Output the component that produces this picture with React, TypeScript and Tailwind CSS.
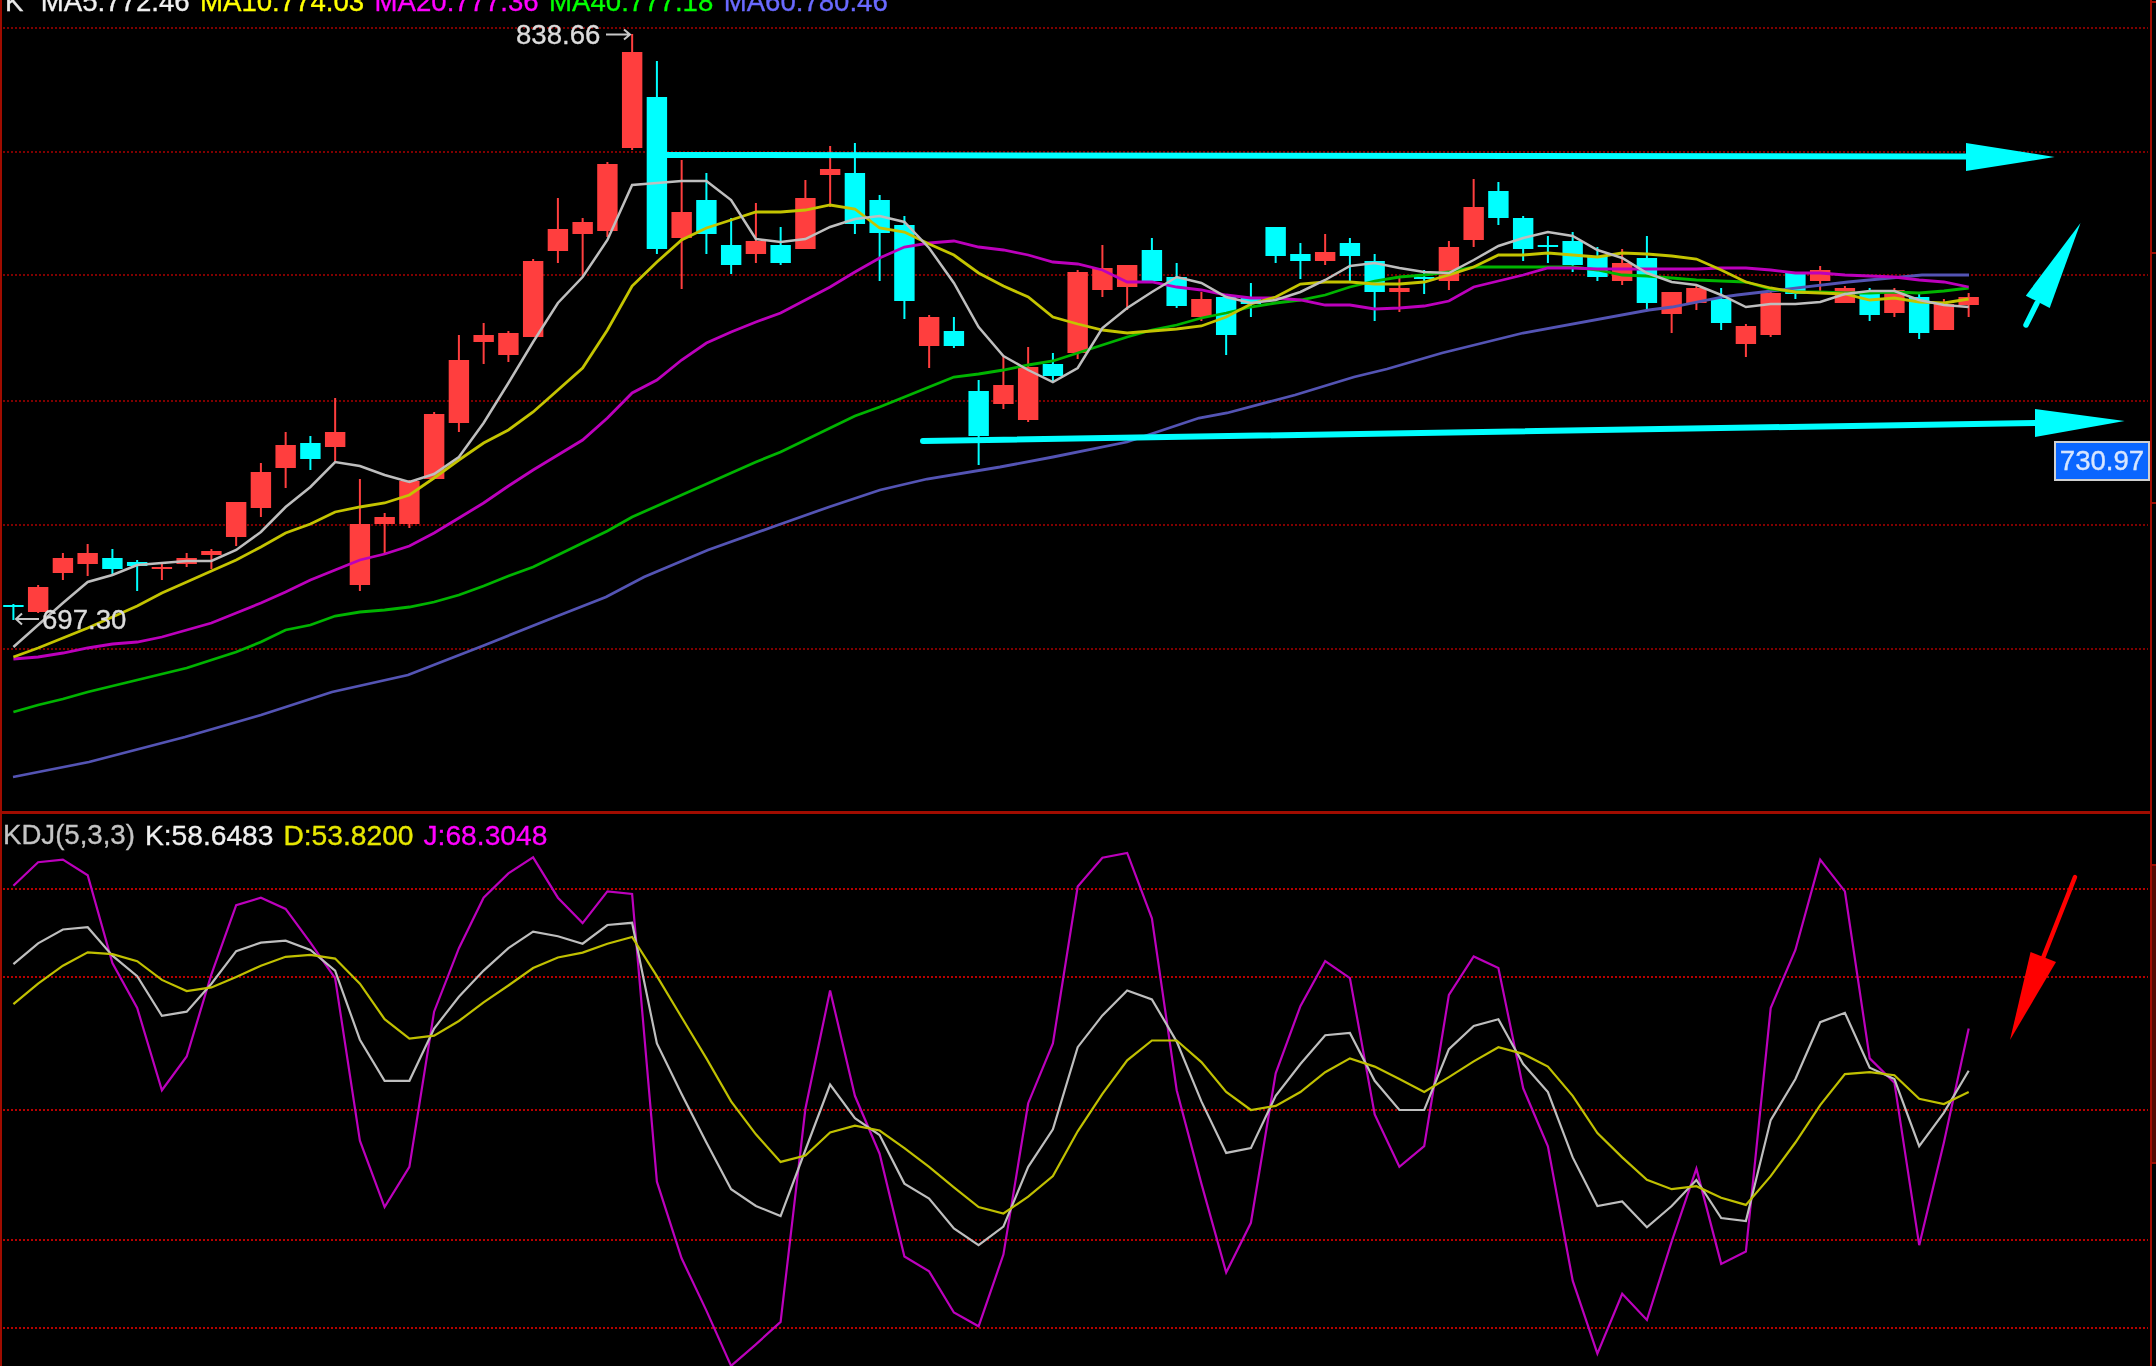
const X = (i: number) => 13.4 + 24.75 * i;

type Candle = [number, number, number, number, "r" | "c"];
const candles: Candle[] = [
  [604, 605, 607, 620, "c"], [585, 587, 612, 613, "r"], [553, 558, 573, 580, "r"], [544, 553, 564, 576, "r"],
  [549, 558, 569, 574, "c"], [560, 562, 566, 591, "c"], [563, 567, 569, 580, "r"], [553, 558, 564, 567, "r"],
  [549, 551, 555, 569, "r"], [502, 502, 537, 546, "r"], [463, 472, 508, 517, "r"], [432, 445, 468, 488, "r"],
  [436, 443, 459, 470, "c"], [398, 432, 447, 463, "r"], [479, 524, 585, 591, "r"], [513, 517, 524, 553, "r"],
  [480, 481, 524, 528, "r"], [412, 414, 479, 479, "r"], [335, 360, 423, 432, "r"], [323, 335, 342, 364, "r"],
  [331, 333, 355, 362, "r"], [259, 261, 337, 337, "r"], [198, 229, 251, 263, "r"], [218, 222, 234, 276, "r"],
  [162, 164, 231, 237, "r"], [34, 52, 148, 150, "r"], [61, 97, 249, 254, "c"], [160, 212, 238, 289, "r"],
  [173, 200, 234, 254, "c"], [218, 245, 265, 274, "c"], [203, 241, 254, 263, "r"], [227, 245, 263, 265, "c"],
  [180, 198, 249, 249, "r"], [146, 169, 175, 207, "r"], [143, 173, 224, 234, "c"], [195, 200, 233, 281, "c"],
  [216, 225, 301, 319, "c"], [315, 317, 346, 368, "r"], [317, 331, 346, 348, "c"], [380, 391, 436, 465, "c"],
  [357, 385, 404, 409, "r"], [347, 367, 420, 422, "r"], [353, 364, 376, 382, "c"], [270, 272, 353, 359, "r"],
  [245, 268, 290, 297, "r"], [265, 265, 287, 310, "r"], [238, 250, 281, 281, "c"], [263, 277, 306, 308, "c"],
  [292, 299, 317, 321, "r"], [295, 297, 335, 355, "c"], [283, 298, 304, 317, "c"], [227, 227, 256, 263, "c"],
  [243, 254, 261, 279, "c"], [234, 252, 261, 265, "r"], [238, 243, 256, 281, "c"], [254, 261, 292, 321, "c"],
  [278, 288, 292, 312, "r"], [270, 277, 279, 294, "c"], [241, 247, 281, 290, "r"], [179, 207, 240, 247, "r"],
  [182, 191, 218, 225, "c"], [216, 218, 249, 261, "c"], [236, 245, 247, 263, "c"], [232, 241, 265, 272, "c"],
  [247, 256, 277, 281, "c"], [249, 263, 281, 285, "r"], [236, 258, 303, 311, "c"], [292, 292, 314, 333, "r"],
  [285, 288, 303, 310, "r"], [288, 299, 323, 330, "c"], [324, 326, 344, 357, "r"], [290, 293, 335, 337, "r"],
  [273, 273, 294, 299, "c"], [266, 270, 281, 291, "r"], [286, 288, 303, 303, "r"], [288, 292, 315, 321, "c"],
  [288, 290, 313, 317, "r"], [294, 297, 333, 339, "c"], [299, 304, 330, 330, "r"], [293, 297, 305, 317, "r"],
];

const ma5 = [647, 625, 603, 582, 575, 565, 563, 561, 561, 550, 532, 507, 487, 462, 466, 475, 482, 474, 457, 423, 383, 342, 303, 277, 240, 185, 183, 181, 181, 200, 239, 242, 239, 227, 219, 216, 222, 248, 283, 327, 356, 370, 382, 368, 328, 308, 292, 277, 283, 297, 303, 300, 292, 280, 266, 263, 268, 272, 273, 260, 246, 238, 232, 236, 250, 258, 273, 282, 285, 295, 307, 304, 304, 302, 294, 291, 291, 300, 305, 307];
const ma10 = [657, 648, 638, 628, 617, 606, 593, 582, 571, 560, 547, 533, 524, 512, 507, 503, 495, 478, 460, 443, 430, 412, 390, 368, 330, 286, 262, 240, 228, 220, 212, 212, 210, 205, 209, 228, 232, 244, 255, 273, 286, 297, 317, 324, 330, 333, 331, 329, 326, 317, 304, 297, 284, 282, 282, 284, 284, 282, 275, 267, 255, 255, 253, 255, 257, 253, 254, 256, 259, 270, 282, 288, 292, 293, 294, 300, 298, 302, 303, 299];
const ma20 = [659, 657, 653, 648, 644, 642, 637, 630, 623, 613, 603, 592, 580, 570, 560, 554, 546, 533, 518, 503, 486, 470, 455, 440, 418, 393, 380, 360, 343, 332, 322, 313, 300, 287, 272, 258, 247, 243, 241, 247, 250, 255, 262, 264, 270, 282, 282, 287, 290, 295, 298, 298, 300, 305, 305, 309, 308, 306, 301, 287, 281, 275, 268, 268, 269, 269, 269, 269, 269, 268, 268, 270, 273, 273, 275, 276, 277, 280, 282, 287];
const ma40 = [712, 705, 699, 692, 686, 680, 674, 668, 660, 652, 642, 630, 625, 616, 612, 610, 607, 602, 595, 586, 576, 567, 555, 543, 531, 517, 506, 495, 484, 473, 462, 452, 440, 428, 416, 407, 397, 387, 377, 374, 370, 365, 361, 353, 345, 337, 330, 325, 318, 313, 307, 303, 300, 295, 287, 281, 277, 275, 272, 267, 267, 267, 267, 267, 270, 275, 276, 278, 280, 281, 282, 289, 292, 292, 293, 293, 292, 293, 291, 288];
const ma60: [number, number][] = [
  [13, 777], [89, 762], [185, 737], [261, 715], [332, 692], [408, 675], [485, 645], [555, 617], [606, 597], [644, 577],
  [708, 550], [778, 525], [829, 507], [880, 490], [927, 479], [1000, 467], [1053, 457], [1127, 442], [1199, 418], [1227, 413],
  [1295, 395], [1354, 377], [1387, 369], [1442, 353], [1523, 333], [1649, 310], [1672, 307], [1723, 297], [1737, 295], [1848, 282],
  [1922, 275], [1969, 275],
];

const jZ = [283, 220, 213, 255, 490, 610, 830, 740, 520, 335, 315, 345, 435, 530, 965, 1143, 1035, 620, 450, 315, 250, 207, 315, 383, 298, 305, 1075, 1280, 1420, 1568, 1510, 1450, 880, 563, 845, 1000, 1275, 1315, 1425, 1462, 1270, 865, 705, 285, 208, 195, 370, 830, 1080, 1318, 1185, 785, 605, 485, 530, 895, 1035, 980, 575, 472, 503, 825, 980, 1340, 1535, 1375, 1445, 1235, 1040, 1295, 1262, 610, 455, 213, 298, 745, 810, 1245, 970, 665];
const kZ = [493, 437, 400, 394, 470, 525, 631, 620, 545, 458, 435, 430, 455, 510, 695, 805, 805, 665, 580, 510, 450, 406, 418, 438, 388, 382, 705, 840, 970, 1095, 1140, 1167, 990, 815, 905, 950, 1080, 1120, 1200, 1245, 1195, 1035, 935, 715, 630, 563, 587, 700, 860, 998, 985, 845, 760, 683, 677, 805, 883, 883, 720, 658, 640, 760, 835, 1010, 1140, 1128, 1197, 1140, 1070, 1172, 1180, 910, 800, 648, 623, 770, 800, 980, 890, 778];
const dZ = [600, 545, 497, 461, 466, 485, 535, 565, 555, 527, 497, 473, 468, 478, 545, 640, 692, 684, 645, 595, 550, 503, 475, 462, 438, 420, 525, 635, 745, 860, 948, 1022, 1005, 943, 925, 938, 985, 1035, 1090, 1143, 1160, 1115, 1060, 940, 840, 750, 697, 697, 755, 835, 883, 872, 835, 782, 745, 767, 800, 835, 795, 753, 715, 733, 767, 845, 945, 1010, 1070, 1095, 1087, 1118, 1137, 1060, 970, 870, 787, 782, 790, 853, 867, 835];

const pts = (ys: number[]) => ys.map((y, i) => `${X(i).toFixed(1)},${y}`).join(" ");
const ptsK = (ys: number[]) => ys.map((z, i) => `${X(i).toFixed(1)},${(780 + z / 2.676).toFixed(1)}`).join(" ");

const topGrid = [28, 152, 275, 401, 525, 649];
const lowGrid = [889, 977, 1110, 1240, 1328];
const CYAN = "#00ffff";

export default function App() {
  return (
    <div className="w-[2156px] h-[1366px] bg-black overflow-hidden flex font-['Liberation_Sans',Arial,sans-serif] text-[27.6px] leading-[28px] blur-[0.5px] [-webkit-text-stroke:0.35px_currentColor]">
      <main className="flex-1 flex flex-col">
        <section className="relative h-[814px] shrink-0 border-l-2 border-r-2 border-b-[3px] border-[#a00c00] overflow-hidden">
          <div className="relative z-10 flex gap-[10.4px] pl-[3px] -mt-[12px] whitespace-nowrap">
            <span className="text-[#e8e8e8] mr-[7px]">K</span>
            <span className="text-[#f0f0f0]">MA5:772.46</span>
            <span className="text-[#ffff00]">MA10:774.03</span>
            <span className="text-[#ff00ff]">MA20:777.36</span>
            <span className="text-[#00ff00]">MA40:777.18</span>
            <span className="text-[#6a6aff]">MA60:780.46</span>
          </div>

          <svg className="absolute inset-0 w-full h-full" viewBox="2 0 2148 811" preserveAspectRatio="none">
            {topGrid.map((y) => (
              <line key={y} x1="3" x2="2148" y1={y} y2={y} stroke="#800000" strokeWidth="2" strokeDasharray="2 2" />
            ))}
            {candles.map(([h, t, b, l, c], i) => {
              const col = c === "r" ? "#ff3e3e" : CYAN;
              return (
                <g key={i}>
                  <line x1={X(i)} x2={X(i)} y1={h} y2={l} stroke={col} strokeWidth="2" />
                  <rect x={X(i) - 10.2} y={t} width="20.4" height={Math.max(b - t, 2)} fill={col} />
                </g>
              );
            })}
            <polyline points={ma60.map(([x, y]) => `${x},${y}`).join(" ")} fill="none" stroke="#5454b4" strokeWidth="2.8" />
            <polyline points={pts(ma40)} fill="none" stroke="#00b400" strokeWidth="2.8" />
            <polyline points={pts(ma20)} fill="none" stroke="#bc00bc" strokeWidth="2.8" />
            <polyline points={pts(ma10)} fill="none" stroke="#c4c400" strokeWidth="2.8" />
            <polyline points={pts(ma5)} fill="none" stroke="#bebebe" strokeWidth="2.5" />

            <line x1="666" y1="155" x2="1966" y2="156.5" stroke={CYAN} strokeWidth="6" />
            <polygon points="1966,143 2054.6,157 1966,171" fill={CYAN} />
            <line x1="923" y1="441" x2="2035" y2="423" stroke={CYAN} strokeWidth="6" strokeLinecap="round" />
            <polygon points="2035,409 2124.6,421 2035,437" fill={CYAN} />
            <line x1="2026" y1="325" x2="2037" y2="303" stroke={CYAN} strokeWidth="5.5" strokeLinecap="round" />
            <polygon points="2025.8,295.7 2080.5,223 2049.7,308" fill={CYAN} />

            <g stroke="#c8c8c8" strokeWidth="2" fill="none">
              <path d="M606 34.5H630M624 29.5L630 34.5L624 39.5" />
              <path d="M39 619H16M22 613.5L16 619L22 624.5" />
            </g>
          </svg>

          <span className="absolute left-[514px] top-[21px] text-[#dcdcdc]">838.66</span>
          <span className="absolute left-[40px] top-[606px] text-[#dcdcdc]">697.30</span>
          <div className="absolute right-0 top-[441px] w-[96px] h-[40px] bg-[#0a66ff] border-2 border-[#d0d0d0] text-[#d8e6ff] flex items-center justify-center">
            730.97
          </div>
        </section>

        <section className="relative flex-1 border-l-2 border-r-2 border-[#a00c00] overflow-hidden">
          <svg className="absolute inset-0 w-full h-full" viewBox="2 814 2148 552" preserveAspectRatio="none">
            {lowGrid.map((y) => (
              <line key={y} x1="3" x2="2148" y1={y} y2={y} stroke="#b80000" strokeWidth="2" strokeDasharray="2 2" />
            ))}
            <polyline points={ptsK(jZ)} fill="none" stroke="#bc00bc" strokeWidth="2.2" />
            <polyline points={ptsK(kZ)} fill="none" stroke="#bebebe" strokeWidth="2.2" />
            <polyline points={ptsK(dZ)} fill="none" stroke="#c0c000" strokeWidth="2.2" />
            <line x1="2075" y1="877" x2="2043" y2="958" stroke="#ff0000" strokeWidth="4.5" strokeLinecap="round" />
            <polygon points="2030.6,952 2056,962 2010,1040" fill="#ff0000" />
          </svg>
          <div className="relative z-10 flex gap-[10px] pl-[1px] pt-[7px] whitespace-nowrap text-[28.2px]">
            <span className="text-[#c4c4c4] text-[27.6px]">KDJ(5,3,3)</span>
            <span className="text-[#f0f0f0]">K:58.6483</span>
            <span className="text-[#e8e800]">D:53.8200</span>
            <span className="text-[#ff00ff]">J:68.3048</span>
          </div>
        </section>
      </main>

      <aside className="relative w-[4px] shrink-0">
        <div className="absolute inset-x-0 top-[1px] h-[2px] bg-[#a00c00]" />
        <div className="absolute inset-x-0 top-[252px] h-[2px] bg-[#a00c00]" />
        <div className="absolute inset-x-0 top-[502px] h-[2px] bg-[#a00c00]" />
        <div className="absolute inset-x-0 top-[864px] h-[300px] bg-[#560800] border-y-2 border-[#a00c00]" />
      </aside>
    </div>
  );
}
